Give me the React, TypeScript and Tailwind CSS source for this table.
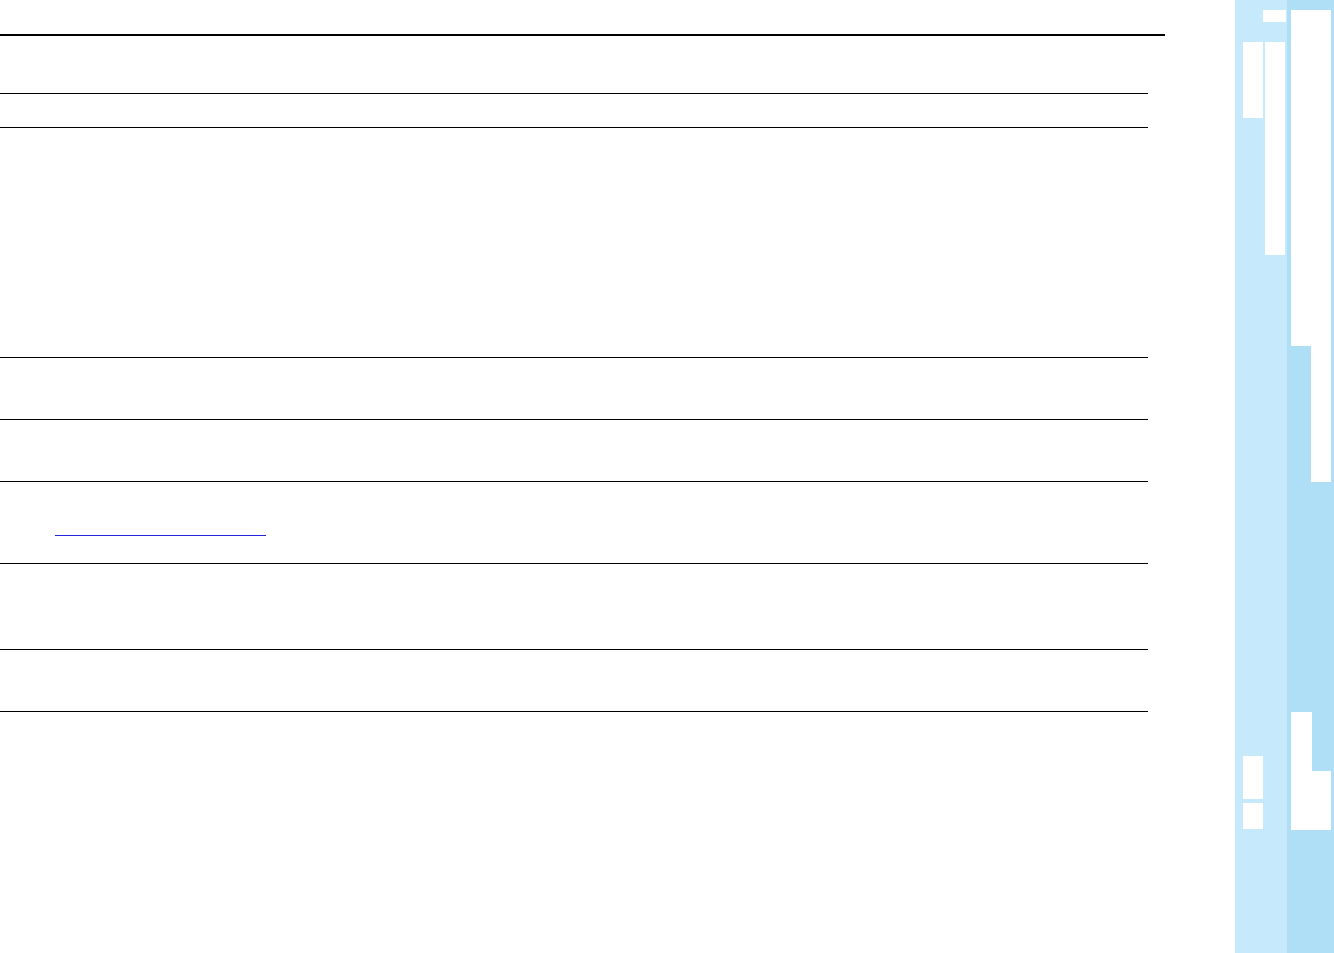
import React from "react";

function Row({ h, children }: { h: string; children?: React.ReactNode }) {
  return <div className={`w-[1148px] border-b border-black ${h}`}>{children}</div>;
}

function Minimap() {
  return (
    <svg width="99" height="953" viewBox="0 0 99 953" className="block">
      <rect x="0" y="0" width="52" height="953" fill="#c6eafc" />
      <rect x="52" y="0" width="47" height="953" fill="#aedff7" />
      <g fill="#ffffff">
        <rect x="28" y="10" width="23" height="12" />
        <rect x="8" y="42" width="20" height="76" />
        <rect x="30" y="42" width="20" height="213" />
        <rect x="56" y="10" width="40" height="336" />
        <rect x="76" y="346" width="20" height="136" />
        <rect x="56" y="712" width="21" height="118" />
        <rect x="56" y="771" width="40" height="59" />
        <rect x="8" y="756" width="20" height="43" />
        <rect x="8" y="803" width="20" height="26" />
      </g>
    </svg>
  );
}

export default function App() {
  return (
    <div className="flex h-[953px] w-[1334px] overflow-hidden bg-white" style={{ fontFamily: '"Liberation Sans", Arial, sans-serif' }}>
      <div className="w-[1235px] shrink-0 pt-[34px]">
        <div className="h-[2px] w-[1165px] bg-black" />
        <Row h="h-[58px]" />
        <Row h="h-[34px]" />
        <Row h="h-[230px]" />
        <Row h="h-[62px]" />
        <Row h="h-[62px]" />
        <Row h="h-[82px] pl-[55px] pt-[53px]">
          <div className="h-px w-[211px] bg-[#2424dc]" />
        </Row>
        <Row h="h-[86px]" />
        <Row h="h-[62px]" />
      </div>
      <div className="shrink-0">
        <Minimap />
      </div>
    </div>
  );
}
